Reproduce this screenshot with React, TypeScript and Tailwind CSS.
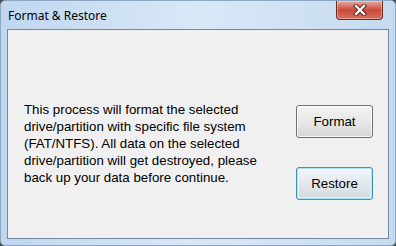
import React from 'react';

function CloseButton() {
  return (
    <div className="mr-[6px] flex h-[19px] w-[47px] items-center justify-center rounded-b-[4px] border border-t-0 border-[#6b2a24] bg-linear-to-b from-[#e9a89e] via-[#c9483a] to-[#d9705c] shadow-[inset_0_0_0_1px_rgba(255,255,255,0.35)]">
      <svg width="16" height="12" viewBox="0 0 16 12">
        <path d="M4 2 L12 10 M12 2 L4 10" stroke="#4a1a16" strokeWidth="4.2" strokeLinecap="square" />
        <path d="M4 2 L12 10 M12 2 L4 10" stroke="#ffffff" strokeWidth="2.4" strokeLinecap="square" />
      </svg>
    </div>
  );
}

function WinButton({ label, focused }: { label: string; focused?: boolean }) {
  return (
    <button
      className={
        'flex h-[33px] w-[77px] items-center justify-center rounded-[3px] border text-[13.3px] text-black ' +
        (focused
          ? 'border-[#3d93b5] bg-linear-to-b from-[#f0f6f9] via-[#e2e8ec] to-[#d3dadf] shadow-[inset_0_0_0_1px_#aee3f5,inset_0_0_0_2px_rgba(255,255,255,0.5)]'
          : 'border-[#707070] bg-linear-to-b from-[#f3f3f3] via-[#e8e8e8] to-[#d6d6d6] shadow-[inset_0_0_0_1px_rgba(255,255,255,0.8)]')
      }
      style={{ fontFamily: '"Liberation Sans", Arial, sans-serif' }}
    >
      {label}
    </button>
  );
}

export default function App() {
  return (
    <div className="h-[246px] w-[396px] overflow-hidden bg-[#4a4a4a]">
      <div className="flex h-full w-full flex-col rounded-[5px] border border-[#8ba7c4] bg-linear-to-r from-[#c0d7ef] via-[#d9e8f7] to-[#c6dbf0] px-[6px] pb-[6px]">
        {/* title bar */}
        <div className="flex h-[28px] items-start">
          <div
            className="pl-[1px] pt-[7px] text-[12px] leading-[16px] text-black"
            style={{ fontFamily: '"Noto Sans", "Open Sans", sans-serif' }}
          >
            Format &amp; Restore
          </div>
          <div className="ml-auto">
            <CloseButton />
          </div>
        </div>

        {/* client area */}
        <div className="flex flex-1 items-start border border-[#7687a0] bg-[#f0f0f0] pl-[16px] pr-[15px]">
          <p
            className="mt-[71px] w-[245px] text-[13.3px] leading-[17px] text-black"
            style={{ fontFamily: '"Liberation Sans", Arial, sans-serif' }}
          >
            This process will format the selected
            <br />
            drive/partition with specific file system
            <br />
            (FAT/NTFS). All data on the selected
            <br />
            drive/partition will get destroyed, please
            <br />
            back up your data before continue.
          </p>
          <div className="ml-auto mt-[75px] flex flex-col gap-[29px]">
            <WinButton label="Format" />
            <WinButton label="Restore" focused />
          </div>
        </div>
      </div>
    </div>
  );
}
